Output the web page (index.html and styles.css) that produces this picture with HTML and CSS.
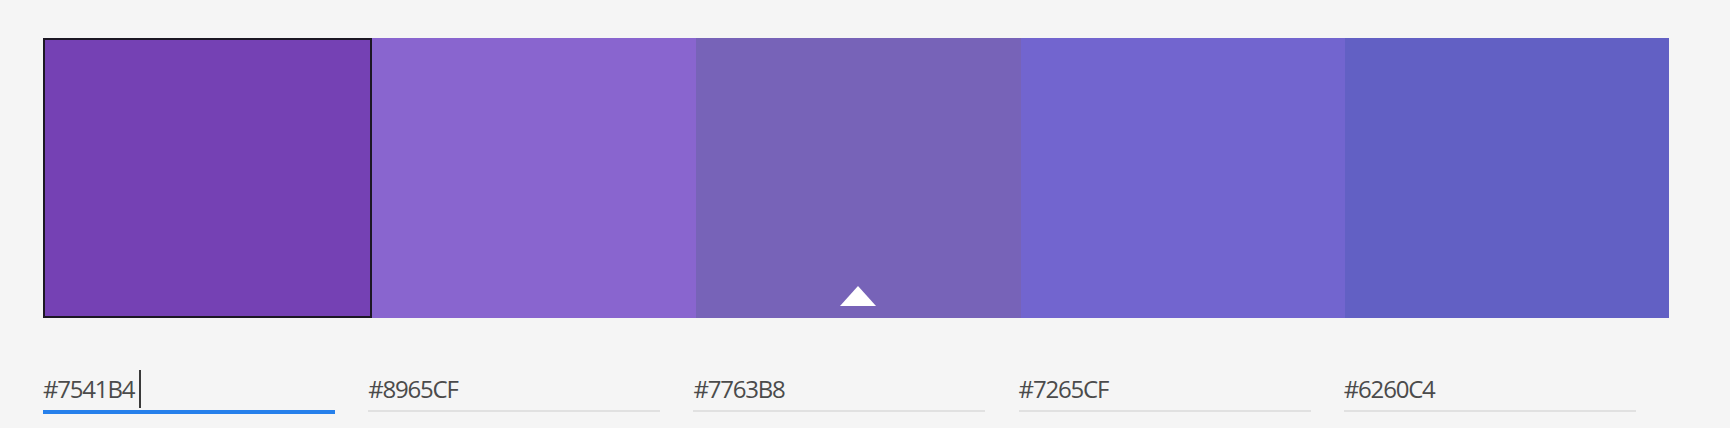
FILE: index.html
```html
<!DOCTYPE html>
<html lang="en">
<head>
<meta charset="utf-8">
<title>Color theme</title>
<link rel="stylesheet" href="styles.css">
</head>
<body>
<div class="page">
  <div class="swatches">
    <div class="swatch selected" style="background:#7541B4"></div>
    <div class="swatch" style="background:#8965CF"></div>
    <div class="swatch base" style="background:#7763B8"><span class="marker"></span></div>
    <div class="swatch" style="background:#7265CF"></div>
    <div class="swatch" style="background:#6260C4"></div>
  </div>
  <div class="fields">
    <div class="cell"><div class="field active"><span class="value">#7541B4</span><span class="caret"></span></div></div>
    <div class="cell"><div class="field"><span class="value">#8965CF</span></div></div>
    <div class="cell"><div class="field"><span class="value">#7763B8</span></div></div>
    <div class="cell"><div class="field"><span class="value">#7265CF</span></div></div>
    <div class="cell"><div class="field"><span class="value">#6260C4</span></div></div>
  </div>
</div>
</body>
</html>
```

FILE: styles.css
```css
html, body {
  margin: 0;
  padding: 0;
  background: #f5f5f5;
}

.page {
  padding: 38px 0 0 43px;
  width: 1626px;
}

.swatches {
  display: grid;
  grid-template-columns: 329px repeat(4, 1fr);
  height: 280px;
}

.swatch {
  position: relative;
  box-sizing: border-box;
}

.swatch.selected {
  border: 2px solid #1c1724;
}

.marker {
  position: absolute;
  left: 50%;
  bottom: 12px;
  margin-left: -18px;
  width: 0;
  height: 0;
  border-left: 18px solid transparent;
  border-right: 18px solid transparent;
  border-bottom: 20px solid #ffffff;
}

.fields {
  display: grid;
  grid-template-columns: repeat(5, 1fr);
  margin-top: 55px;
}

.field {
  width: 292px;
  display: flex;
  align-items: center;
  height: 32px;
  padding-bottom: 5px;
  border-bottom: 2px solid #e1e1e1;
  font-family: "Open Sans", "Noto Sans", sans-serif;
  font-size: 24px;
  letter-spacing: -1.2px;
  color: #4b4b4b;
}

.field.active {
  border-bottom: 4px solid #2680eb;
}

.value {
  line-height: 32px;
}

.caret {
  display: inline-block;
  width: 2px;
  height: 38px;
  margin-left: 5px;
  background: #3a3a3a;
}
```
